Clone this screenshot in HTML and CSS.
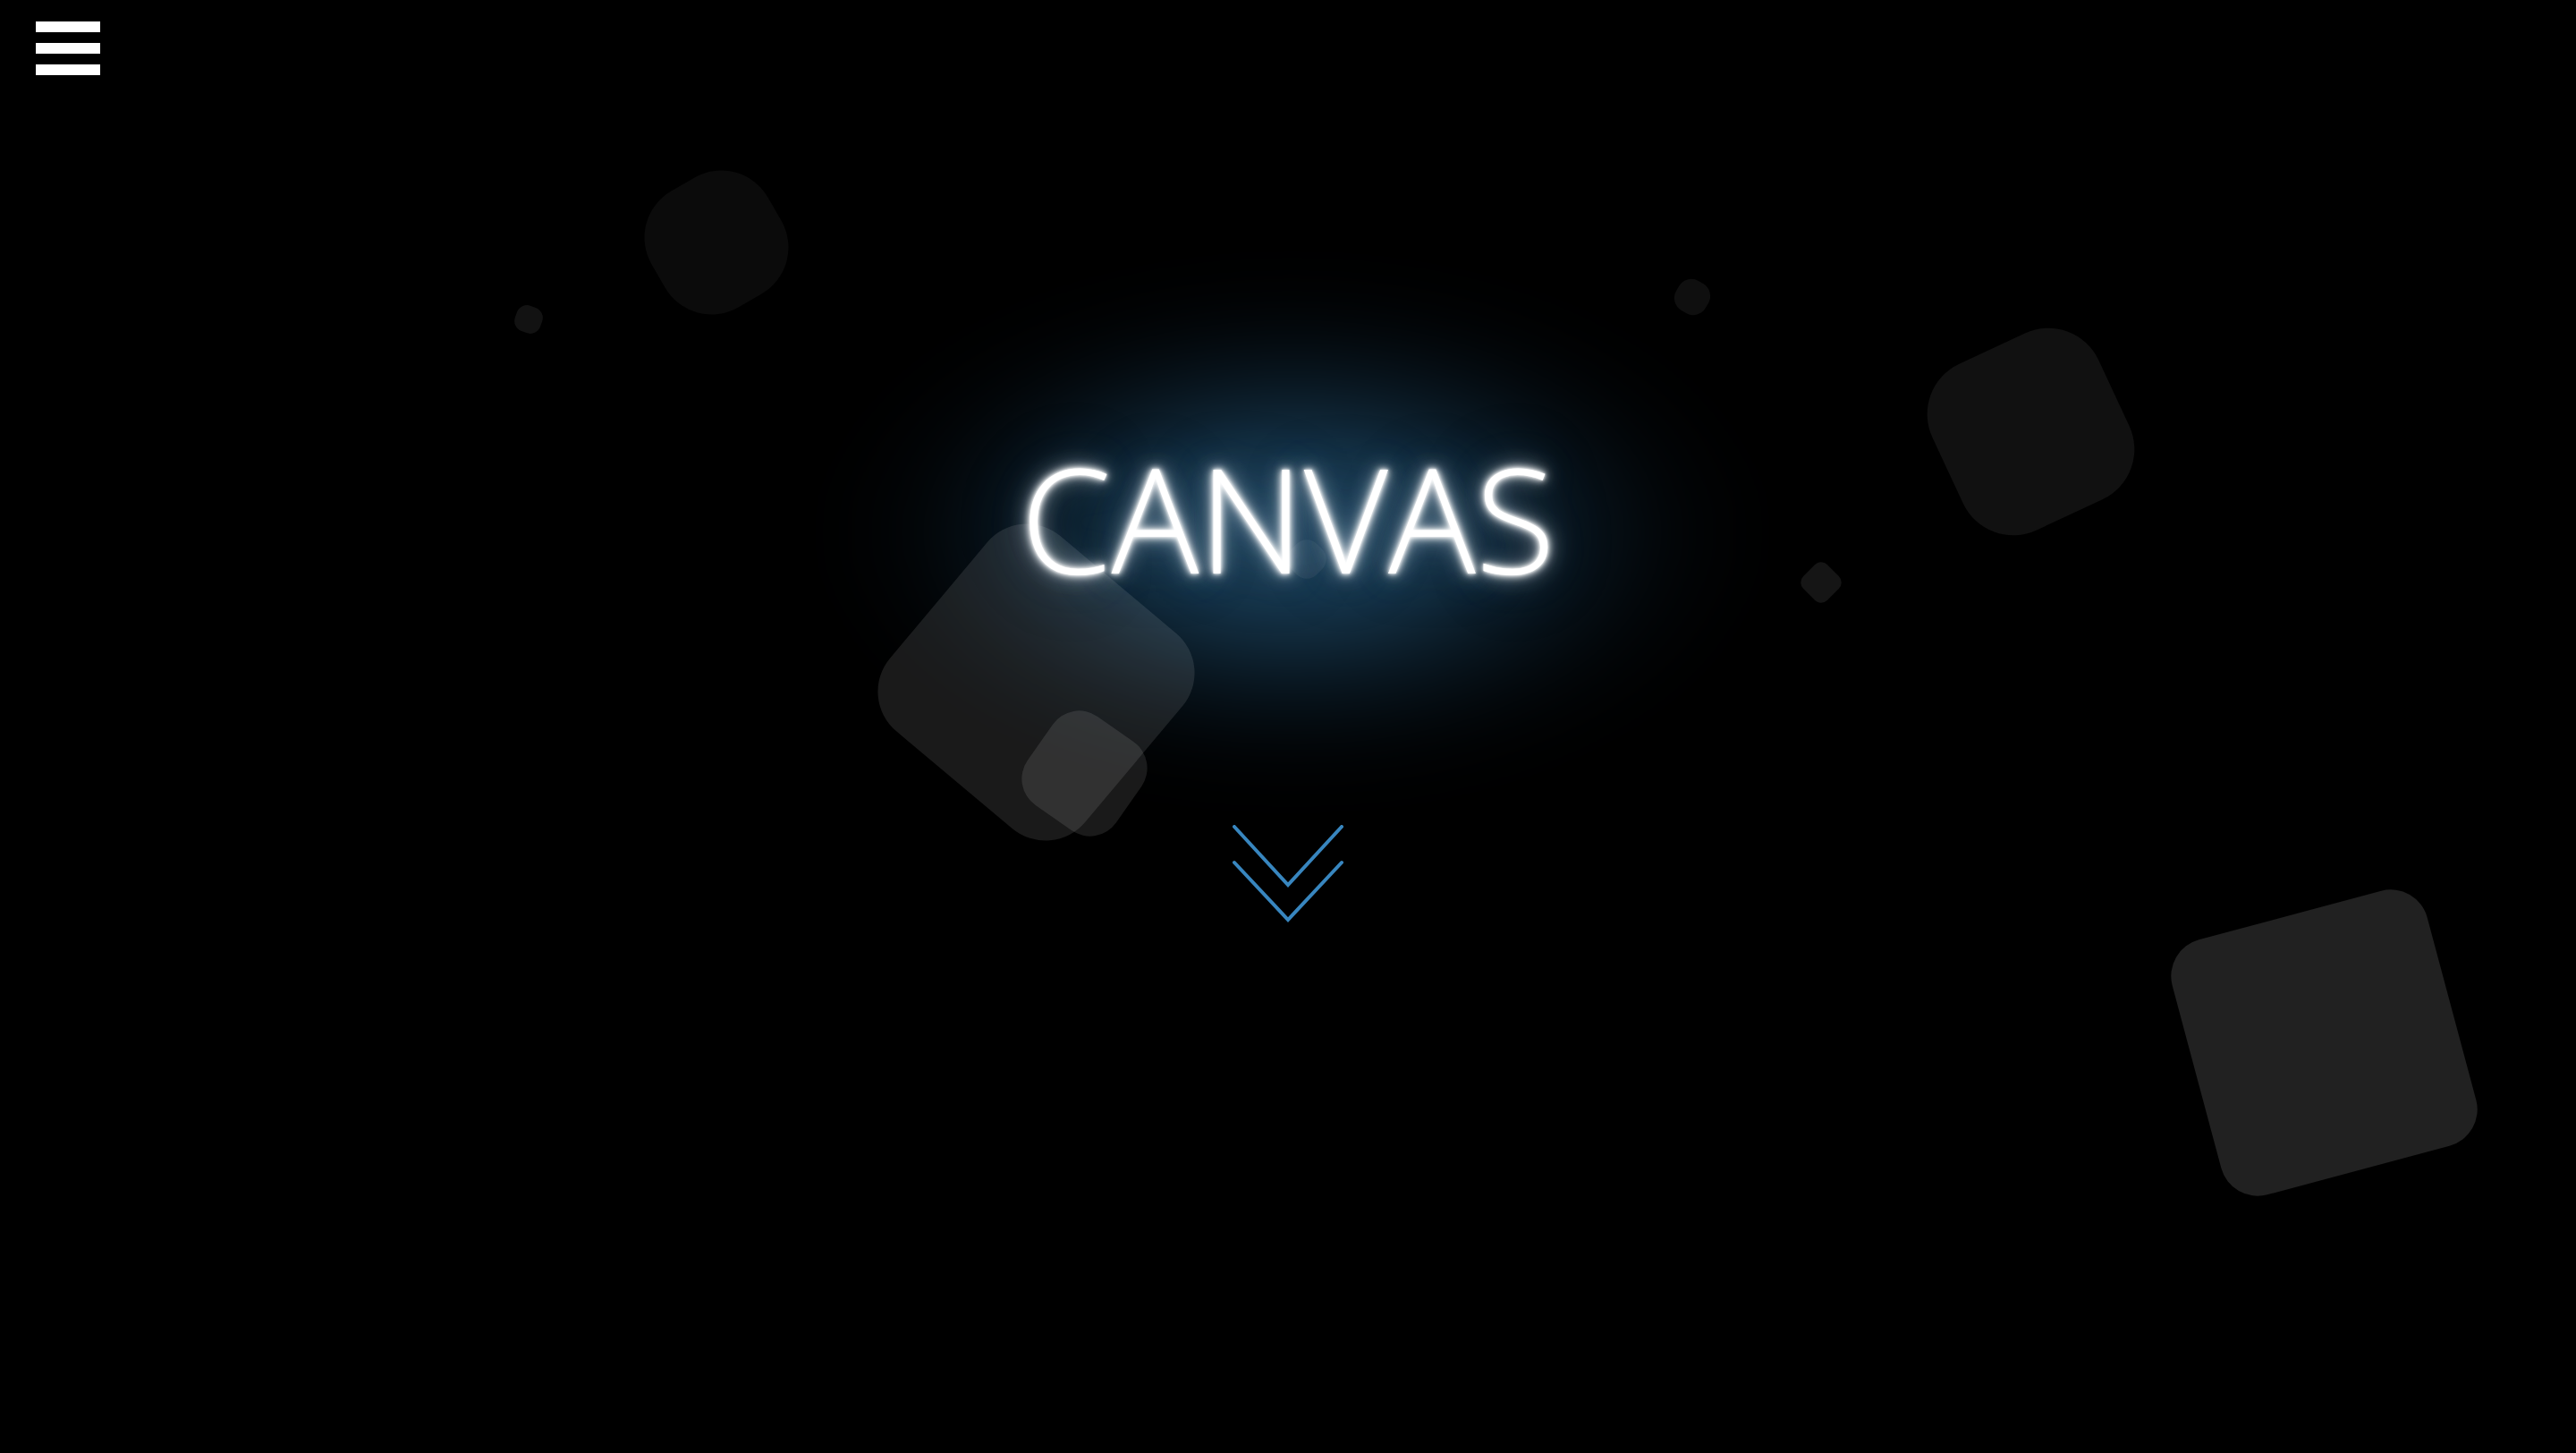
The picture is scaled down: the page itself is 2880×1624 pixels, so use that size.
FILE: index.html
```html
<!DOCTYPE html>
<html lang="en">
<head>
<meta charset="utf-8">
<title>Canvas</title>
<link rel="stylesheet" href="styles.css">
</head>
<body>
<button class="menu-btn" aria-label="Menu">
  <span class="menu-bar"></span>
  <span class="menu-bar"></span>
  <span class="menu-bar"></span>
</button>
<main class="hero">
  <div class="shapes" aria-hidden="true">
    <div class="glow"></div>
    <div class="shape shape-a"></div>
    <div class="shape shape-b"></div>
    <div class="shape shape-c"></div>
    <div class="shape shape-d"></div>
    <div class="shape shape-e"></div>
    <div class="shape shape-f"></div>
    <div class="shape shape-g"></div>
    <div class="shape shape-h"></div>
    <div class="shape shape-i"></div>
  </div>
  <h1 class="title">CANVAS</h1>
  <a class="scroll-down" href="#content" aria-label="Scroll down">
    <svg width="124" height="110" viewBox="0 0 124 110" fill="none" stroke="#3886bf" stroke-width="4" stroke-linecap="round">
      <polyline points="2,2 62,67 122,2"/>
      <polyline points="2,42 62,106 122,42"/>
    </svg>
  </a>
</main>
</body>
</html>
```
FILE: styles.css
```css
html, body {
  margin: 0;
  padding: 0;
  background: #000;
  overflow: hidden;
}

body {
  font-family: "Open Sans", "Liberation Sans", sans-serif;
  color: #fff;
}

.menu-btn {
  position: fixed;
  top: 24px;
  left: 40px;
  z-index: 10;
  display: flex;
  flex-direction: column;
  gap: 12px;
  padding: 0;
  margin: 0;
  border: 0;
  background: transparent;
  cursor: pointer;
}

.menu-bar {
  display: block;
  width: 72px;
  height: 12px;
  background: #fff;
}

.hero {
  position: relative;
  height: 100vh;
  display: flex;
  flex-direction: column;
  align-items: center;
  padding-top: 497px;
  box-sizing: border-box;
}

.shapes {
  position: absolute;
  inset: 0;
  z-index: 0;
}

.glow {
  position: absolute;
  left: 920px;
  top: 300px;
  width: 1050px;
  height: 590px;
  border-radius: 50%;
  background: radial-gradient(ellipse closest-side at 50% 50%,
    rgba(28, 66, 92, 0.95) 0%,
    rgba(24, 58, 82, 0.9) 30%,
    rgba(14, 36, 52, 0.65) 55%,
    rgba(6, 16, 24, 0.3) 80%,
    rgba(0, 0, 0, 0) 100%);
  filter: blur(30px);
}

.shape {
  position: absolute;
}

.shape-a {
  left: 726px; top: 196px;
  width: 150px; height: 150px;
  border-radius: 60px;
  transform: rotate(-30deg);
  background: #0b0b0b;
}

.shape-b {
  left: 576px; top: 342px;
  width: 30px; height: 30px;
  border-radius: 12px;
  transform: rotate(20deg);
  background: #121212;
}

.shape-c {
  left: 1873px; top: 313px;
  width: 38px; height: 38px;
  border-radius: 16px;
  transform: rotate(30deg);
  background: #0f0f0f;
}

.shape-d {
  left: 2017px; top: 632px;
  width: 38px; height: 38px;
  border-radius: 10px;
  transform: rotate(45deg);
  background: #151515;
}

.shape-e {
  left: 2168px; top: 380px;
  width: 205px; height: 205px;
  border-radius: 62px;
  transform: rotate(-25deg);
  background: #111;
}

.shape-f {
  left: 2451px; top: 1018px;
  width: 295px; height: 295px;
  border-radius: 42px;
  transform: rotate(-15deg);
  background: #212121;
}

.shape-g {
  left: 1016px; top: 620px;
  width: 285px; height: 285px;
  border-radius: 58px;
  transform: rotate(40deg);
  background: rgba(255, 255, 255, 0.1);
}

.shape-h {
  left: 1152px; top: 804px;
  width: 121px; height: 121px;
  border-radius: 36px;
  transform: rotate(35deg);
  background: rgba(255, 255, 255, 0.1);
}

.shape-i {
  left: 1441px; top: 605px;
  width: 40px; height: 40px;
  border-radius: 16px;
  transform: rotate(45deg);
  background: rgba(255, 255, 255, 0.06);
}

.title {
  position: relative;
  z-index: 1;
  margin: 0;
  font-family: "Open Sans", "Liberation Sans", sans-serif;
  font-weight: 300;
  font-size: 163px;
  line-height: 1;
  letter-spacing: 0;
  color: #fff;
  text-shadow:
    0 0 3px #fff,
    0 0 7px #fff,
    0 0 12px rgba(255, 255, 255, 0.9),
    0 0 22px rgba(230, 240, 250, 0.7),
    0 0 40px rgba(150, 185, 210, 0.45),
    0 0 80px rgba(50, 95, 130, 0.4);
}

.scroll-down {
  position: relative;
  z-index: 1;
  display: block;
  margin-top: 262px;
  width: 124px;
  height: 110px;
}

.scroll-down svg {
  display: block;
}
```
